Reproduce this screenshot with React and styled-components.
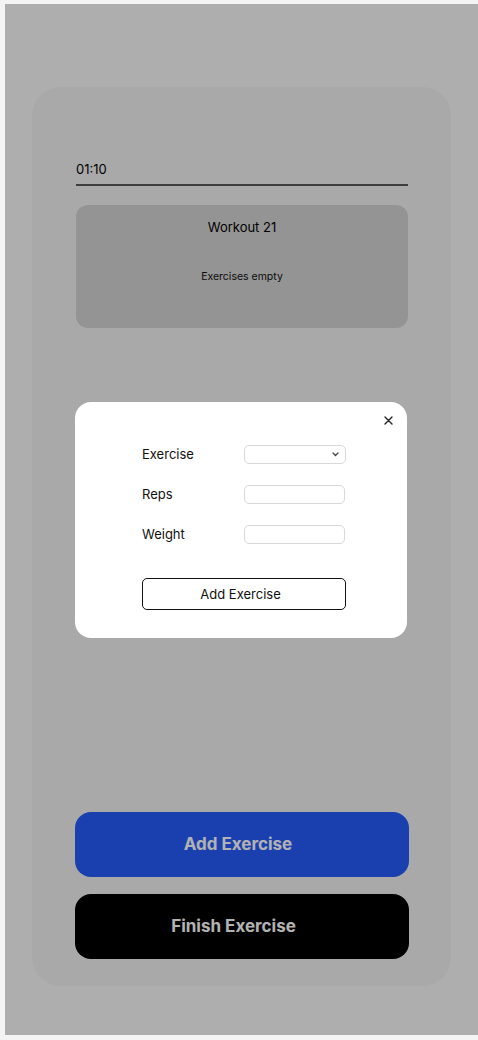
import React from 'react';
import styled, { createGlobalStyle } from 'styled-components';

const GlobalStyle = createGlobalStyle`
  html, body {
    margin: 0;
    padding: 0;
    background: #f4f4f4;
    font-family: Inter, "Noto Sans", "Liberation Sans", sans-serif;
  }
  * { box-sizing: border-box; }
`;

const Screen = styled.div`
  position: relative;
  margin: 4px 0 0 5px;
  width: 473px;
  height: 1031px;
  background: #fafafa;
  padding: 83px 27px 49px;
  display: flex;
`;

const Card = styled.div`
  flex: 1;
  background: #f3f3f3;
  border-radius: 28px;
  padding: 74px 42px 27px 44px;
  display: flex;
  flex-direction: column;
`;

const Timer = styled.div`
  font-size: 13px;
  line-height: 17px;
  color: #000;
  padding-bottom: 6px;
  margin-right: 1px;
  border-bottom: 2px solid #5a5a5a;
`;

const WorkoutBox = styled.div`
  margin-top: 19px;
  margin-right: 1px;
  height: 123px;
  background: #d4d4d4;
  border-radius: 12px;
  display: flex;
  flex-direction: column;
  align-items: center;
  padding-top: 14px;
  gap: 34px;
`;

const WorkoutTitle = styled.div`
  font-size: 13px;
  line-height: 17px;
  color: #000;
`;

const EmptyText = styled.div`
  font-size: 10.5px;
  line-height: 14px;
  color: #111;
`;

const Actions = styled.div`
  margin-top: auto;
  display: flex;
  flex-direction: column;
  gap: 17px;
  margin-left: -1px;
`;

const BigButton = styled.button`
  height: 65px;
  border: none;
  border-radius: 16px;
  background: ${(p) => (p.$dark ? '#000' : 'rgb(38, 92, 252)')};
  color: #fff;
  font-family: inherit;
  font-size: 17px;
  font-weight: 700;
  padding: 0 ${(p) => (p.$dark ? '17px' : '8px')} 2px 0;
`;

const Overlay = styled.div`
  position: absolute;
  inset: 0;
  background: rgba(0, 0, 0, 0.3);
`;

const Modal = styled.div`
  position: absolute;
  left: 70px;
  top: 398px;
  width: 332px;
  height: 236px;
  background: #fff;
  border-radius: 16px;
  padding: 43px 0 0 67px;
`;

const CloseButton = styled.button`
  position: absolute;
  top: 12px;
  right: 13px;
  width: 12px;
  height: 12px;
  padding: 0;
  border: none;
  background: none;
  display: flex;
  align-items: center;
  justify-content: center;
`;

const Form = styled.div`
  display: grid;
  grid-template-columns: 102px 101px;
  row-gap: 21px;
  align-items: center;
`;

const Label = styled.label`
  font-size: 13px;
  line-height: 16px;
  color: #111;
  margin-top: -2px;
`;

const Field = styled.div`
  position: relative;
  width: ${(p) => (p.$select ? '102px' : '101px')};
  height: 19px;
  border: 1px solid #d8d8d8;
  border-radius: 5px;
  background: #fff;
`;

const Chevron = styled.svg`
  position: absolute;
  right: 6px;
  top: 6px;
`;

const SubmitButton = styled.button`
  margin-top: 34px;
  width: 204px;
  height: 32px;
  border: 1px solid #111;
  border-radius: 5px;
  background: #fff;
  font-family: inherit;
  font-size: 13px;
  color: #111;
  padding: 0 7px 0 0;
`;

export default function App() {
  return (
    <>
      <GlobalStyle />
      <Screen>
        <Card>
          <Timer>01:10</Timer>
          <WorkoutBox>
            <WorkoutTitle>Workout 21</WorkoutTitle>
            <EmptyText>Exercises empty</EmptyText>
          </WorkoutBox>
          <Actions>
            <BigButton>Add Exercise</BigButton>
            <BigButton $dark>Finish Exercise</BigButton>
          </Actions>
        </Card>
        <Overlay />
        <Modal>
          <CloseButton aria-label="close">
            <svg width="9" height="9" viewBox="0 0 9 9">
              <path d="M1 1L8 8M8 1L1 8" stroke="#222" strokeWidth="1.4" strokeLinecap="round" />
            </svg>
          </CloseButton>
          <Form>
            <Label>Exercise</Label>
            <Field $select>
              <Chevron width="7" height="5" viewBox="0 0 7 5">
                <path d="M1 1L3.5 3.5L6 1" stroke="#444" strokeWidth="1.3" fill="none" strokeLinecap="round" />
              </Chevron>
            </Field>
            <Label>Reps</Label>
            <Field />
            <Label>Weight</Label>
            <Field />
          </Form>
          <SubmitButton>Add Exercise</SubmitButton>
        </Modal>
      </Screen>
    </>
  );
}
